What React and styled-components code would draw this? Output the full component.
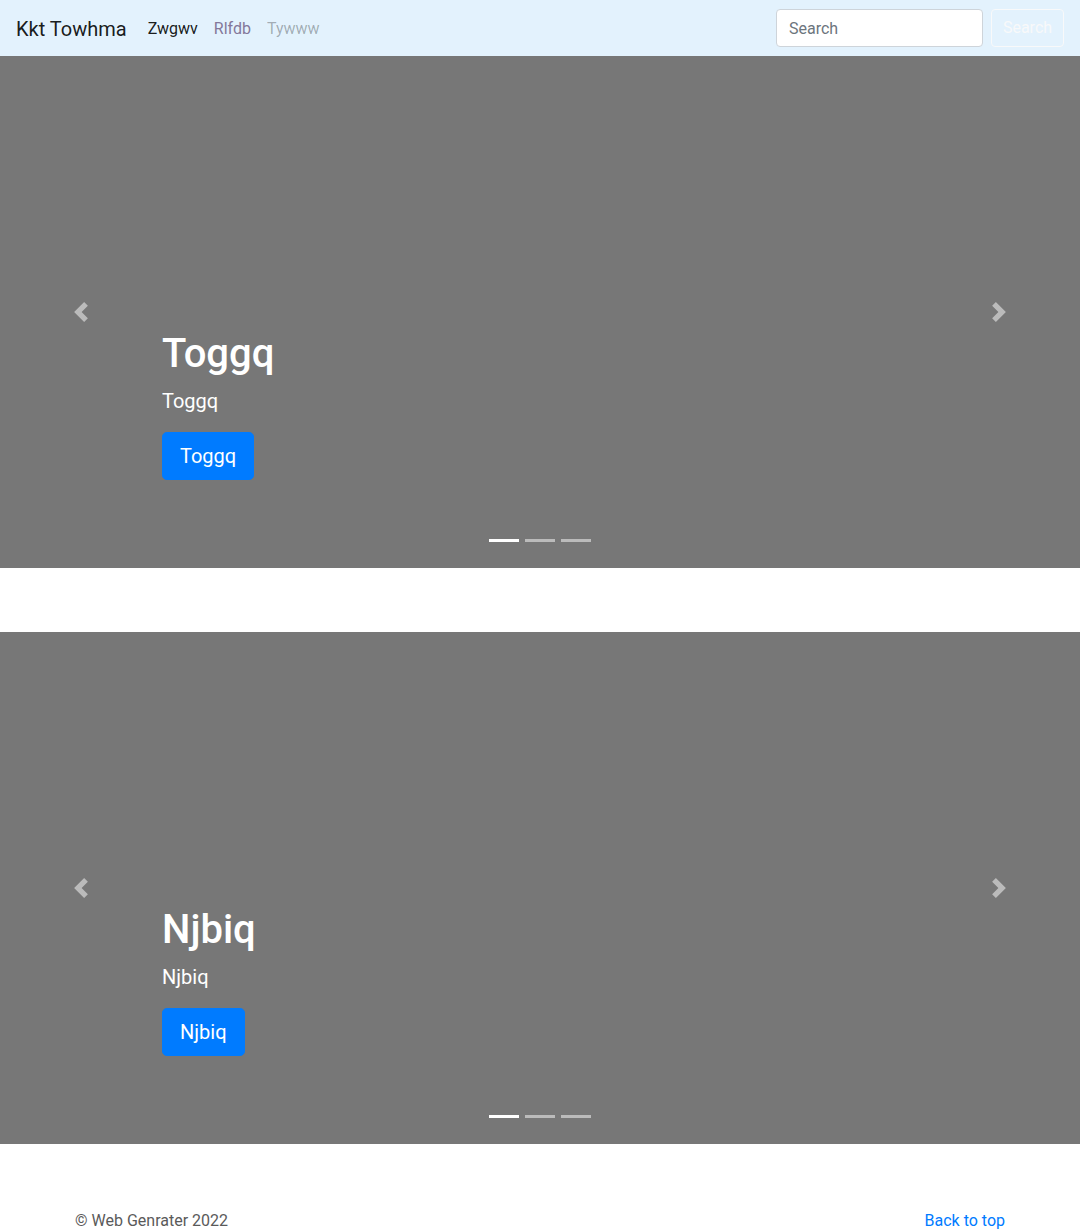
import React from 'react';
import styled, { createGlobalStyle } from 'styled-components';

const GlobalStyle = createGlobalStyle`
	* { box-sizing: border-box; }
	body {
		margin: 0;
		font-family: "Segoe UI", Roboto, "Helvetica Neue", Arial, sans-serif;
		font-size: 16px;
		line-height: 1.5;
		color: #5a5a5a;
		background: #fff;
	}
`;

const slides = [
	{ title: 'Toggq' },
	{ title: 'Njbiq' },
];

const Chevron = ({ dir }) => (
	<svg width="20" height="20" viewBox="0 0 8 8" fill="#fff">
		{dir === 'prev' ? (
			<path d="M5.25 0l-4 4 4 4 1.5-1.5-2.5-2.5 2.5-2.5-1.5-1.5z" />
		) : (
			<path d="M2.75 0l-1.5 1.5 2.5 2.5-2.5 2.5 1.5 1.5 4-4-4-4z" />
		)}
	</svg>
);

const Carousel = ({ title }) => (
	<CarouselBox>
		<Slide>
			<Caption>
				<Heading>{title}</Heading>
				<Lead>{title}</Lead>
				<ButtonRow>
					<PrimaryButton href="#">{title}</PrimaryButton>
				</ButtonRow>
			</Caption>
		</Slide>
		<Control side="left">
			<Chevron dir="prev" />
		</Control>
		<Control side="right">
			<Chevron dir="next" />
		</Control>
		<Indicators>
			<Dot active />
			<Dot />
			<Dot />
		</Indicators>
	</CarouselBox>
);

const App = () => (
	<>
		<GlobalStyle />
		<Navbar>
			<Brand href="#">Kkt Towhma</Brand>
			<NavList>
				<NavLink href="#" tone="active">Zwgwv</NavLink>
				<NavLink href="#" tone="visited">Rlfdb</NavLink>
				<NavLink href="#" tone="disabled">Tywww</NavLink>
			</NavList>
			<SearchForm>
				<SearchInput placeholder="Search" />
				<OutlineButton type="button">Search</OutlineButton>
			</SearchForm>
		</Navbar>
		<main>
			{slides.map(s => (
				<Carousel key={s.title} title={s.title} />
			))}
		</main>
		<Footer>
			<FooterText>© Web Genrater 2022</FooterText>
			<FooterText>
				<TopLink href="#">Back to top</TopLink>
			</FooterText>
		</Footer>
	</>
);

export default App;

const Navbar = styled.nav`
	display: flex;
	align-items: center;
	height: 56px;
	padding: 8px 16px;
	background: #e3f2fd;
`;

const Brand = styled.a`
	font-size: 20px;
	line-height: 30px;
	margin-right: 13px;
	padding-top: 2px;
	color: rgba(0, 0, 0, 0.9);
	text-decoration: none;
`;

const NavList = styled.div`
	display: flex;
	flex: 1;
	padding-top: 2px;
`;

const linkColors = {
	active: 'rgba(0, 0, 0, 0.9)',
	visited: '#84789a',
	disabled: 'rgba(0, 0, 0, 0.3)',
};

const NavLink = styled.a`
	padding: 8px;
	color: ${p => linkColors[p.tone]};
	text-decoration: none;
	font-size: 16px;
`;

const SearchForm = styled.form`
	display: flex;
	align-items: center;
	gap: 8px;
	margin: 0;
`;

const SearchInput = styled.input`
	width: 207px;
	height: 38px;
	padding: 6px 12px;
	font: inherit;
	font-size: 16px;
	color: #495057;
	background: #fff;
	border: 1px solid #ced4da;
	border-radius: 4px;
	outline: none;
	&::placeholder { color: #6c757d; }
`;

const OutlineButton = styled.button`
	width: 73px;
	height: 38px;
	padding: 6px 0;
	font: inherit;
	font-size: 16px;
	color: #f8f9fa;
	background: transparent;
	border: 1px solid #f8f9fa;
	border-radius: 4px;
`;

const CarouselBox = styled.div`
	position: relative;
	height: 512px;
	margin-bottom: 64px;
	background: #777;
	overflow: hidden;
`;

const Slide = styled.div`
	display: flex;
	align-items: flex-end;
	height: 100%;
	padding: 0 15% 72px;
`;

const Caption = styled.div`
	color: #fff;
	text-align: left;
`;

const Heading = styled.h1`
	margin: 0 0 8px;
	font-size: 40px;
	font-weight: 500;
	line-height: 48px;
`;

const Lead = styled.p`
	margin: 0 0 16px;
	font-size: 20px;
	line-height: 30px;
`;

const ButtonRow = styled.div`
	display: flex;
	margin: 0 0 16px;
`;

const PrimaryButton = styled.a`
	display: inline-block;
	height: 48px;
	padding: 8px 17px;
	font-size: 20px;
	line-height: 30px;
	color: #fff;
	background: #007bff;
	border: 1px solid #007bff;
	border-radius: 4.8px;
	text-decoration: none;
`;

const Control = styled.a`
	position: absolute;
	top: 0;
	bottom: 0;
	${p => p.side}: 0;
	width: 15%;
	display: flex;
	align-items: center;
	justify-content: center;
	opacity: 0.5;
`;

const Indicators = styled.ol`
	position: absolute;
	left: 0;
	right: 0;
	bottom: 10px;
	display: flex;
	justify-content: center;
	margin: 0 15% 16px;
	padding: 0;
	list-style: none;
`;

const Dot = styled.li`
	width: 30px;
	height: 3px;
	margin: 0 3px;
	background: ${p => (p.active ? '#fff' : 'rgba(255, 255, 255, 0.5)')};
`;

const Footer = styled.footer`
	display: flex;
	justify-content: space-between;
	max-width: 960px;
	margin: 0 auto;
	padding: 0 15px;
`;

const FooterText = styled.p`
	margin: 0 0 16px;
	padding-top: 1px;
`;

const TopLink = styled.a`
	color: #007bff;
	text-decoration: none;
`;
